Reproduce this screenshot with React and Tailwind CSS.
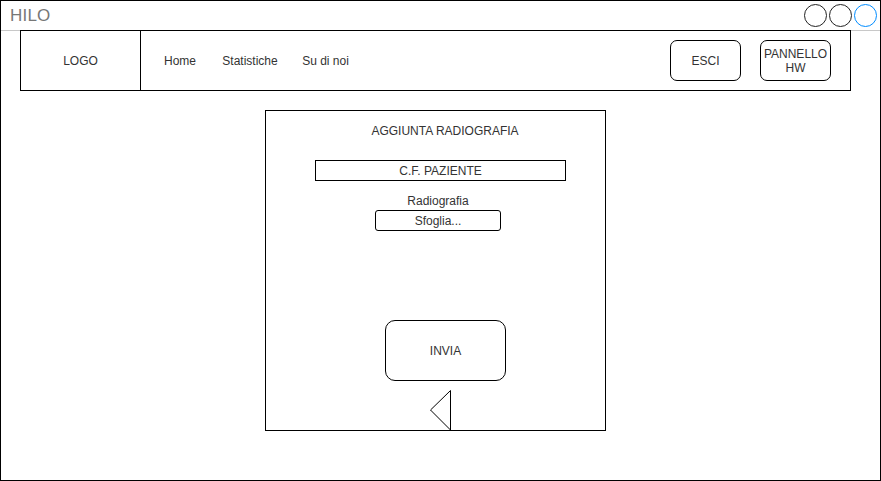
export default function App() {
  return (
    <div className="w-[881px] h-[481px] border border-black bg-white font-['Liberation_Sans',Arial,sans-serif] text-[#333] flex flex-col">
      {/* Title bar */}
      <div className="h-[30px] border-b border-[#c8c8c8] flex items-center justify-between pl-[9px] pr-[3px] shrink-0">
        <span className="text-[17px] leading-none text-[#777] tracking-[0.2px]">HILO</span>
        <div className="flex gap-[2px] items-center">
          <div className="w-[23px] h-[23px] rounded-full border border-[#222]"></div>
          <div className="w-[23px] h-[23px] rounded-full border border-[#222]"></div>
          <div className="w-[23px] h-[23px] rounded-full border border-[#008cff]"></div>
        </div>
      </div>

      {/* Navbar */}
      <div className="relative -mt-px ml-[19px] w-[831px] h-[61px] border border-black bg-white flex items-center shrink-0 text-xs">
        <div className="w-[120px] h-full border-r border-black flex items-center justify-center">LOGO</div>
        <div className="ml-[9px] w-[60px] text-center">Home</div>
        <div className="w-[80px] text-center">Statistiche</div>
        <div className="w-[71px] text-center">Su di noi</div>
        <div className="flex-1"></div>
        <div className="w-[71px] h-[41px] border border-black rounded-[7px] flex items-center justify-center">ESCI</div>
        <div className="ml-[19px] mr-[19px] w-[71px] h-[41px] border border-black rounded-[7px] flex flex-col items-center justify-center leading-[14px] text-center">
          <span>PANNELLO</span>
          <span>HW</span>
        </div>
      </div>

      {/* Card */}
      <div className="mt-[19px] ml-[264px] w-[341px] h-[321px] border border-black flex flex-col text-xs shrink-0">
        <div className="h-[40px] ml-[119px] w-[120px] flex items-center justify-center whitespace-nowrap">AGGIUNTA RADIOGRAFIA</div>
        <div className="mt-[9px] ml-[49px] w-[251px] h-[21px] border border-black flex items-center justify-center">C.F. PAZIENTE</div>
        <div className="mt-[13px] leading-[14px] ml-[109px] w-[126px] text-center">Radiografia</div>
        <div className="mt-[2px] ml-[109px] w-[126px] h-[21px] border border-black rounded-[3px] flex items-center justify-center">Sfoglia...</div>
        <div className="mt-[89px] ml-[119px] w-[121px] h-[61px] border border-black rounded-[10px] flex items-center justify-center">INVIA</div>
        <div className="mt-[9px] ml-[164px]">
          <svg width="21" height="40" viewBox="0 0 21 40" className="block">
            <polygon points="20.5,0.5 0.5,20 20.5,40" fill="none" stroke="black" strokeWidth="1" />
          </svg>
        </div>
      </div>
    </div>
  );
}
